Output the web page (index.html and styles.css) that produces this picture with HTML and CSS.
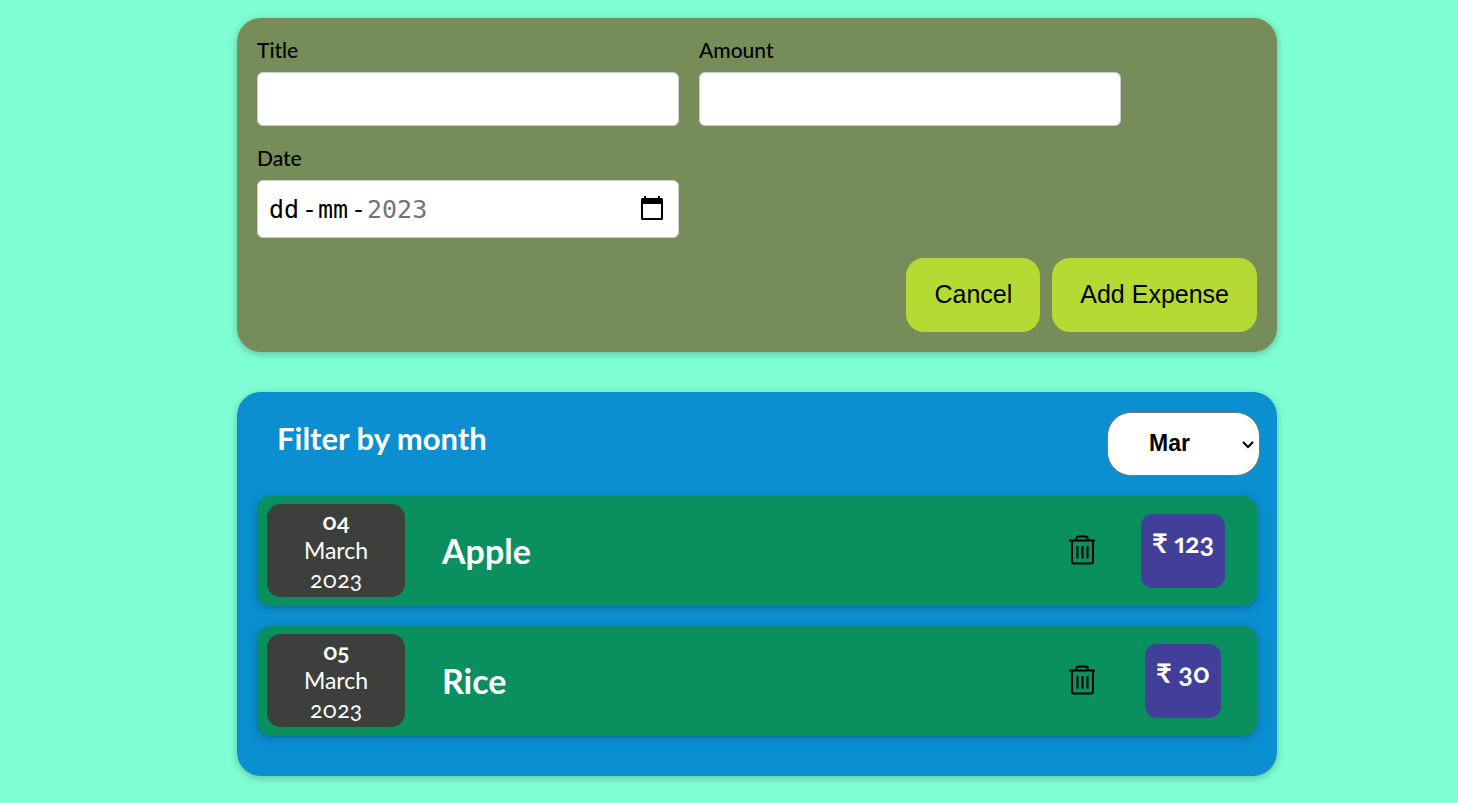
FILE: index.html
```html
<!DOCTYPE html>
<html lang="en">
<head>
<meta charset="utf-8">
<title>Expenses</title>
<link rel="stylesheet" href="styles.css">
</head>
<body>
<main class="page">
  <form class="card expense-form">
    <div class="fields">
      <div class="field">
        <label class="field-label" for="title">Title</label>
        <input class="field-input" id="title" type="text">
      </div>
      <div class="field">
        <label class="field-label" for="amount">Amount</label>
        <input class="field-input" id="amount" type="text" inputmode="decimal">
      </div>
      <div class="field">
        <label class="field-label" for="day">Date</label>
        <div class="date-box">
          <input class="date-part" id="day" type="text" value="dd" aria-label="Day">
          <span class="date-dash">-</span>
          <input class="date-part" type="text" value="mm" aria-label="Month">
          <span class="date-dash">-</span>
          <input class="date-part date-year" type="text" value="2023" aria-label="Year">
          <button class="date-button" type="button" aria-label="Open calendar">
            <svg width="24" height="26" viewBox="0 0 24 26" aria-hidden="true">
              <path fill-rule="evenodd" d="M4 0h2v2h12V0h2v2h1.500a1.500 1.500 0 0 1 1.500 1.500v19a1.500 1.500 0 0 1-1.500 1.500h-19A1.500 1.500 0 0 1 1 22.500v-19A1.500 1.500 0 0 1 2.500 2H4zM3 8v14h18V8z"/>
            </svg>
          </button>
        </div>
      </div>
    </div>
    <div class="actions">
      <button class="button" type="button">Cancel</button>
      <button class="button" type="submit">Add Expense</button>
    </div>
  </form>

  <section class="card expenses">
    <div class="filter">
      <label class="filter-label" for="month">Filter by month</label>
      <div class="select-box">
        <select class="filter-select" id="month">
          <option>Jan</option><option>Feb</option><option selected>Mar</option><option>Apr</option>
          <option>May</option><option>Jun</option><option>Jul</option><option>Aug</option>
          <option>Sep</option><option>Oct</option><option>Nov</option><option>Dec</option>
        </select>
        <svg class="select-arrow" viewBox="0 0 12 8" aria-hidden="true"><path d="M1 1l5 5 5-5"/></svg>
      </div>
    </div>
    <ul class="items">
      <li class="item">
        <time class="item-date" datetime="2023-03-04"><strong>04</strong><span>March</span><span>2023</span></time>
        <h2 class="item-title">Apple</h2>
        <button class="item-delete" type="button" aria-label="Delete Apple">
          <svg class="trash" viewBox="0 0 28 30" aria-hidden="true"><path d="M1 5.500h26M8 5.500V4.500a3 3 0 0 1 3-3h6a3 3 0 0 1 3 3v1M4 5.500v21a2 2 0 0 0 2 2h17a2 2 0 0 0 2-2v-21M9.500 11v12.500M14.500 11v12.500M19.500 11v12.500"/></svg>
        </button>
        <div class="item-price">₹ 123</div>
      </li>
      <li class="item">
        <time class="item-date" datetime="2023-03-05"><strong>05</strong><span>March</span><span>2023</span></time>
        <h2 class="item-title">Rice</h2>
        <button class="item-delete" type="button" aria-label="Delete Rice">
          <svg class="trash" viewBox="0 0 28 30" aria-hidden="true"><path d="M1 5.500h26M8 5.500V4.500a3 3 0 0 1 3-3h6a3 3 0 0 1 3 3v1M4 5.500v21a2 2 0 0 0 2 2h17a2 2 0 0 0 2-2v-21M9.500 11v12.500M14.500 11v12.500M19.500 11v12.500"/></svg>
        </button>
        <div class="item-price">₹ 30</div>
      </li>
    </ul>
  </section>
</main>
</body>
</html>
```
FILE: styles.css
```css
* {
  box-sizing: border-box;
}

body {
  margin: 0;
  padding: 18px 0 18px 56px;
  background: #7fffd4;
  font-family: Lato, "Open Sans", sans-serif;
  font-variant-numeric: oldstyle-nums proportional-nums;
}

.page {
  display: flex;
  flex-direction: column;
  gap: 40px;
  max-width: 1040px;
  margin: 0 auto;
}

.card {
  border-radius: 24px;
  box-shadow: 0 2px 8px rgba(0, 0, 0, 0.25);
}

.expense-form {
  padding: 20px;
  background: #778d59;
}

.fields {
  display: flex;
  flex-wrap: wrap;
  gap: 20px;
}

.field {
  display: flex;
  flex-direction: column;
  gap: 10px;
  width: 422px;
}

.field-label {
  font-size: 21px;
  font-weight: 500;
  line-height: 24px;
}

.field-input,
.date-box {
  width: 100%;
  border: 1px solid #ccc;
  border-radius: 6px;
  background: #fff;
}

.field-input {
  height: 54px;
  padding: 8px 12px;
  font: inherit;
  font-size: 24px;
}

.date-box {
  display: flex;
  align-items: center;
  height: 58px;
  padding: 0 14px 0 11px;
  font-family: "DejaVu Sans Mono", monospace;
  font-size: 25px;
}

.date-part {
  width: 32px;
  padding: 0;
  border: 0;
  background: none;
  font: inherit;
}

.date-dash {
  width: 17px;
  text-align: center;
}

.date-year {
  width: 64px;
  color: #757575;
}

.date-button {
  display: flex;
  margin-left: auto;
  padding: 0;
  border: 0;
  background: none;
}

.actions {
  display: flex;
  justify-content: flex-end;
  gap: 12px;
  margin-top: 20px;
}

.button {
  height: 74px;
  padding: 0 28px 2px;
  border: 0;
  border-radius: 18px;
  background: #b5da33;
  color: #000;
  font-family: "Liberation Sans", Arial, sans-serif;
  font-size: 25px;
}

.expenses {
  padding: 20px 20px 40px;
  background: #0b8fd1;
}

.filter {
  display: flex;
  justify-content: space-between;
  padding: 0 0 20px 20px;
}

.filter-label {
  padding-top: 7px;
  color: #fff;
  font-size: 31px;
  font-weight: 700;
  line-height: 38px;
}

.select-box {
  position: relative;
  margin-right: -3px;
}

.filter-select {
  display: block;
  width: 153px;
  height: 64px;
  padding: 0 28px 2px 0;
  appearance: none;
  border: 1px solid #767676;
  border-radius: 24px;
  background-color: #fff;
  color: #000;
  font-family: "Liberation Sans", Arial, sans-serif;
  font-size: 23px;
  font-weight: 700;
  text-align: center;
}

.select-arrow {
  position: absolute;
  top: 29px;
  right: 6px;
  width: 12px;
  height: 8px;
  fill: none;
  stroke: #000;
  stroke-width: 2;
  pointer-events: none;
}

.items {
  display: flex;
  flex-direction: column;
  gap: 20px;
  margin: 0;
  padding: 0;
  list-style: none;
}

.item {
  display: grid;
  grid-template-columns: 138px 1fr 54px 148px;
  align-items: center;
  height: 110px;
  padding: 0 0 2px 10px;
  border-radius: 14px;
  background: #0a8f5f;
  box-shadow: 0 2px 8px rgba(0, 0, 0, 0.25);
}

.item-date {
  display: flex;
  flex-direction: column;
  align-items: center;
  padding: 3px 0;
  border-radius: 14px;
  background: #3d3f3c;
  color: #fff;
  font-size: 23px;
  line-height: 29px;
}

.item-title {
  margin: 0;
  padding-left: 37px;
  color: #fff;
  font-size: 34px;
  font-weight: 700;
}

.item-delete {
  justify-self: center;
  display: flex;
  padding: 0;
  border: 0;
  background: none;
}

.trash {
  width: 28px;
  height: 30px;
  fill: none;
  stroke: #000;
  stroke-width: 2;
}

.item-price {
  justify-self: center;
  height: 74px;
  margin-top: 2px;
  padding: 12px 11px;
  border-radius: 12px;
  background: #423f9a;
  color: #fff;
  font-size: 27px;
  font-weight: 700;
  line-height: 34px;
}
```
